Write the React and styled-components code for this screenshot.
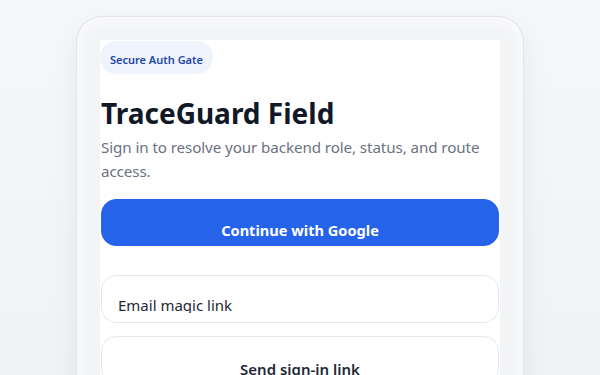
import React from 'react';
import styled, { createGlobalStyle } from 'styled-components';

const GlobalStyle = createGlobalStyle`
  html, body {
    margin: 0;
    padding: 0;
    height: 100%;
  }
  body {
    background: linear-gradient(180deg, #f6f7f9 0%, #f1f2f5 100%);
    font-family: "Noto Sans", "Open Sans", sans-serif;
    overflow: hidden;
  }
`;

const Page = styled.div`
  width: 600px;
  height: 375px;
  display: flex;
  justify-content: center;
  padding-top: 16px;
  box-sizing: border-box;
  overflow: hidden;
`;

const Shell = styled.div`
  width: 448px;
  height: 400px;
  flex-shrink: 0;
  box-sizing: border-box;
  padding: 23px 23px 0;
  border: 1px solid #e2e4e8;
  border-radius: 26px;
  background: #f3f4f6;
  box-shadow: 0 10px 30px rgba(15, 23, 42, 0.06), inset 0 0 18px rgba(255, 255, 255, 0.9);
`;

const Panel = styled.div`
  background: #ffffff;
  height: 100%;
  padding: 1px 1px 0;
  display: flex;
  flex-direction: column;
  overflow: hidden;
`;

const Badge = styled.span`
  align-self: flex-start;
  height: 33px;
  box-sizing: border-box;
  display: flex;
  align-items: center;
  padding: 4px 10px 0;
  border-radius: 999px;
  background: #eef3fc;
  color: #2546a8;
  font-size: 11px;
  font-weight: 600;
  margin-left: -1px;
`;

const Title = styled.h1`
  margin: 22px 0 0;
  font-size: 28px;
  line-height: 35px;
  font-weight: 700;
  color: #111827;
`;

const Subtitle = styled.p`
  margin: 4px 0 0;
  font-size: 15.2px;
  letter-spacing: -0.1px;
  line-height: 24px;
  color: #6b7280;
`;

const Button = styled.button`
  display: block;
  width: 100%;
  height: ${p => (p.primary ? '47px' : '48px')};
  margin-top: ${p => p.gap}px;
  padding: ${p => (p.primary ? '14px' : '18px')} 0 0;
  box-sizing: border-box;
  border: 1px solid ${p => (p.primary ? '#2563eb' : '#e5e7eb')};
  border-radius: 15px;
  background: ${p => (p.primary ? '#2563eb' : '#ffffff')};
  color: ${p => (p.primary ? '#ffffff' : '#1f2937')};
  font-family: inherit;
  font-size: ${p => (p.primary ? '14.6px' : '15px')};
  line-height: 20px;
  font-weight: ${p => (p.primary ? 700 : 600)};
  text-align: center;
  vertical-align: top;
`;

const Field = styled.div`
  margin-top: 29px;
  height: 48px;
  flex-shrink: 0;
  box-sizing: border-box;
  border: 1px solid #e5e7eb;
  border-radius: 15px;
  padding: 19px 16px 0;
`;

const FieldText = styled.div`
  height: 18px;
  overflow: hidden;
  font-size: 15px;
  line-height: 20px;
  color: #1f2937;
`;

export default function App() {
  return (
    <>
      <GlobalStyle />
      <Page>
        <Shell>
          <Panel>
            <Badge>Secure Auth Gate</Badge>
            <Title>TraceGuard Field</Title>
            <Subtitle>Sign in to resolve your backend role, status, and route access.</Subtitle>
            <Button primary gap={16}>Continue with Google</Button>
            <Field>
              <FieldText>Email magic link</FieldText>
            </Field>
            <Button gap={13}>Send sign-in link</Button>
          </Panel>
        </Shell>
      </Page>
    </>
  );
}
